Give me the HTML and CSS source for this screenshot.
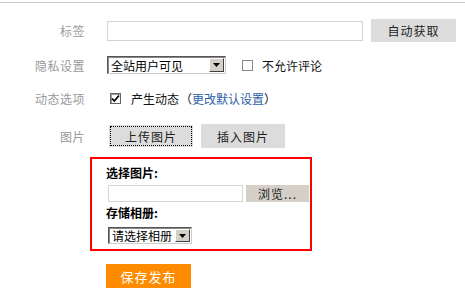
FILE: index.html
```
<!DOCTYPE html>
<html lang="zh-CN">
<head>
  <meta charset="UTF-8">
  <title>发布设置</title>
  <link rel="stylesheet" href="styles.css">
</head>
<body>
<div class="topline"></div>
<form class="post-form">
  <div class="row row-tag">
    <label class="lbl">标签</label>
    <input class="txt tag-input" type="text">
    <button type="button" class="btn btn-gray auto-btn">自动获取</button>
  </div>
  <div class="row row-privacy">
    <label class="lbl">隐私设置</label>
    <div class="sel sel-privacy"><span class="sel-val">全站用户可见</span><span class="sel-arrow"><svg width="7" height="4" viewBox="0 0 7 4"><path d="M0 0h7L3.5 4z" fill="#000"/></svg></span></div>
    <span class="chk"></span>
    <span class="chk-text">不允许评论</span>
  </div>
  <div class="row row-feed">
    <label class="lbl">动态选项</label>
    <span class="chk chk-on"><svg width="9" height="9" viewBox="0 0 9 9"><path d="M1 4.5l2.3 2.5L8 1.5" fill="none" stroke="#000" stroke-width="1.8"/></svg></span>
    <span class="chk-text">产生动态</span><span class="paren">（<a href="#" class="link">更改默认设置</a>）</span>
  </div>
  <div class="row row-pic">
    <label class="lbl">图片</label>
    <button type="button" class="btn btn-gray tab-btn tab-on">上传图片</button>
    <button type="button" class="btn btn-gray tab-btn">插入图片</button>
  </div>
  <div class="upload-box">
    <div class="box-title">选择图片:</div>
    <div class="file-row">
      <input class="txt file-input" type="text">
      <button type="button" class="browse-btn">浏览...</button>
    </div>
    <div class="box-title album-title">存储相册:</div>
    <div class="sel sel-album"><span class="sel-val">请选择相册</span><span class="sel-arrow"><svg width="7" height="4" viewBox="0 0 7 4"><path d="M0 0h7L3.5 4z" fill="#000"/></svg></span></div>
  </div>
  <button type="button" class="save-btn">保存发布</button>
</form>
</body>
</html>
```
FILE: styles.css
```
*{box-sizing:border-box;margin:0;padding:0;}
body{background:#fff;font-family:"Noto Sans CJK SC","Liberation Sans",sans-serif;font-size:12px;color:#000;}
.topline{margin-top:2px;height:1px;background:#c8c8c8;}
.post-form{padding-top:16px;}
.row{display:flex;align-items:center;}
.lbl{width:85px;text-align:right;color:#999;margin-right:22px;letter-spacing:.5px;}
.row-tag{height:23px;}
.row-privacy{height:18px;margin-top:14px;}
.row-feed{height:18px;margin-top:15px;}
.row-pic{height:24px;margin-top:17px;}
.txt{border:1px solid #d4d4d4;background:#fff;font:inherit;outline:none;}
.tag-input{width:256px;height:20px;}
.btn{border:none;font:inherit;cursor:pointer;color:#222;letter-spacing:1px;}
.btn-gray{background:#dcdcdc;}
.auto-btn{margin-left:8px;width:85px;height:23px;}
.sel{display:flex;align-items:center;height:18px;border:1px solid;border-color:#555 #ccc #ccc #555;background:#fff;box-shadow:inset 1px 1px 0 #888;}
.sel-val{flex:1;padding-left:3px;white-space:nowrap;}
.sel-arrow{width:15px;height:14px;margin-right:1px;background:#d4d0c8;border:1px solid;border-color:#fff #404040 #404040 #fff;display:flex;align-items:center;justify-content:center;}
.sel-privacy{width:119px;}
.chk{width:11px;height:11px;border:1px solid #888;display:inline-flex;align-items:center;justify-content:center;background:#fff;}
.row-privacy .chk{margin-left:16px;}
.chk-text{margin-left:9px;color:#111;}
.row-feed .chk{margin-left:3px;border-color:#666;box-shadow:inset 1px 1px 0 #999;}
.row-feed .chk-text{margin-left:10px;}
.paren{color:#111;margin-left:1px;}
.link{color:#2d5fa6;text-decoration:none;}
.tab-btn{width:84px;height:22px;}
.tab-on{margin-left:2px;outline:1px dotted #000;outline-offset:-2px;}
.tab-btn+.tab-btn{margin-left:8px;height:24px;}
.upload-box{margin:9px 0 0 90px;width:222px;height:94px;border:2px solid #f00;padding:6px 0 0 14px;}
.box-title{font-weight:bold;line-height:16px;color:#000;}
.file-row{display:flex;margin-top:4px;padding-left:2px;}
.file-input{width:135px;height:17px;}
.browse-btn{margin-left:3px;width:63px;height:17px;border:none;background:#d4d0c8;font:inherit;color:#222;letter-spacing:1px;}
.album-title{margin-top:3px;}
.sel-album{width:84px;height:17px;margin:6px 0 0 2px;}
.sel-album .sel-arrow{height:13px;}
.save-btn{display:block;margin:13px 0 0 106px;width:85px;height:24px;border:none;background:#ff8c00;color:#fff;font:inherit;font-size:13px;letter-spacing:1px;}
```
